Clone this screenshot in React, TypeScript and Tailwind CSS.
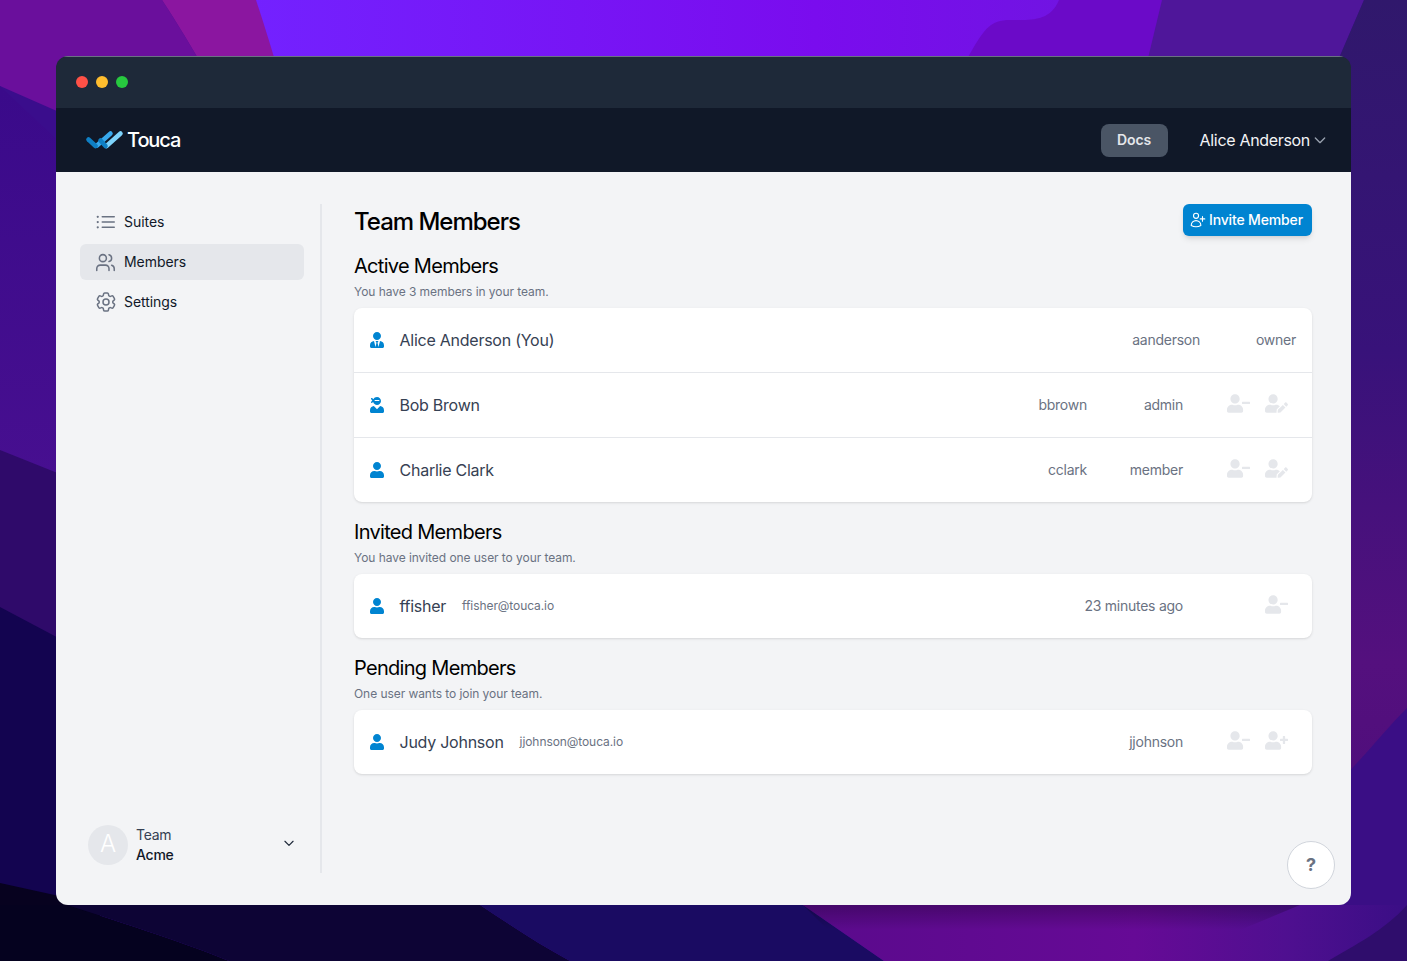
import { ReactNode } from "react";
import { FaUser, FaUserEdit, FaUserMinus, FaUserNinja, FaUserPlus, FaUserTie } from "react-icons/fa";
import { HiOutlineChevronDown } from "react-icons/hi";
import { HiOutlineCog6Tooth, HiOutlineListBullet, HiOutlineUserPlus } from "react-icons/hi2";
import { Users } from "lucide-react";

function Wallpaper() {
  return (
    <svg className="absolute inset-0" width="1407" height="961" viewBox="0 0 1407 961">
      <defs>
        <linearGradient id="top" x1="0" y1="0" x2="1" y2="0">
          <stop offset="0" stopColor="#7322ff" />
          <stop offset="0.6" stopColor="#7a0cee" />
          <stop offset="1" stopColor="#6c18dc" />
        </linearGradient>
        <linearGradient id="right" gradientUnits="userSpaceOnUse" x1="0" y1="0" x2="0" y2="780">
          <stop offset="0" stopColor="#30186c" />
          <stop offset="0.45" stopColor="#38127a" />
          <stop offset="0.85" stopColor="#54107e" />
          <stop offset="1" stopColor="#500e7c" />
        </linearGradient>
        <linearGradient id="left" gradientUnits="userSpaceOnUse" x1="0" y1="90" x2="0" y2="480">
          <stop offset="0" stopColor="#3a0a8a" />
          <stop offset="1" stopColor="#470f90" />
        </linearGradient>
        <linearGradient id="purple" x1="0" y1="0" x2="1" y2="0">
          <stop offset="0" stopColor="#5a0a8c" />
          <stop offset="0.55" stopColor="#660a96" />
          <stop offset="0.8" stopColor="#4f0f90" />
          <stop offset="1" stopColor="#3a0e85" />
        </linearGradient>
        <linearGradient id="shade" x1="0" y1="0" x2="0" y2="1">
          <stop offset="0" stopColor="#000" stopOpacity="0.25" />
          <stop offset="1" stopColor="#000" stopOpacity="0" />
        </linearGradient>
      </defs>
      <rect width="1407" height="961" fill="#3a0d8c" />
      <rect x="240" width="960" height="120" fill="url(#top)" />
      <path d="M0 0H162C195 50 215 90 240 130H100L0 86Z" fill="#6a0f9c" />
      <path d="M162 0H256C266 30 275 60 290 110L240 130C215 90 195 50 162 0Z" fill="#8b16a0" />
      <path d="M1059 0C1050 22 1030 20 1010 20C990 20 985 30 975 45L943 100H1150L1162 0Z" fill="#6b0ac8" />
      <path d="M1162 0H1364L1321 100H1138Z" fill="#4f169a" />
      <path d="M1364 0H1407V780H1300V100H1321Z" fill="url(#right)" />
      <path d="M1300 810C1340 790 1375 740 1407 708V961H1300Z" fill="#3a0e85" />
      <path d="M0 86L100 180V500H0Z" fill="url(#left)" />
      <path d="M0 450L100 490V700H0Z" fill="#2f0a6a" />
      <path d="M0 607L100 660V905H0Z" fill="#130450" />
      <path d="M0 883L100 905V961H0Z" fill="#07021f" />
      <path d="M0 905H67C130 925 190 945 229 961H0Z" fill="#05021f" />
      <path d="M67 905H480C510 925 540 945 570 961H229C190 945 130 925 67 905Z" fill="#0d0435" />
      <path d="M480 905H803L884 961H570C540 945 510 925 480 905Z" fill="#1a0b62" />
      <path d="M803 905H1407V961H884Z" fill="url(#purple)" />
      <path d="M803 905H1300L1240 930H828Z" fill="url(#shade)" />
      <path d="M1328 961C1355 945 1385 930 1407 905V961Z" fill="#2f0d6c" />
    </svg>
  );
}

function Logo() {
  return (
    <svg width="38" height="21" viewBox="0 0 38 21" fill="none" strokeLinecap="round" strokeWidth="4.5">
      <path d="M11 15.5L24.5 3.5" stroke="#38a8ec" />
      <path d="M20.5 16L34.5 3.5" stroke="#7dd3fc" />
      <path d="M2.5 9.5L9.5 16" stroke="#0f7fc4" />
      <path d="M14.5 10.5L19.5 16" stroke="#0f7fc4" />
    </svg>
  );
}

function NavItem({ icon, label, active }: { icon: ReactNode; label: string; active?: boolean }) {
  return (
    <div
      className={
        "flex h-9 items-center rounded-md pl-[14px] text-sm tracking-[-0.05px] text-gray-900 " +
        (active ? "bg-gray-200" : "")
      }
    >
      <span className="flex w-[30px] text-gray-500">{icon}</span>
      {label}
    </div>
  );
}

function Section({ title, sub, children }: { title: string; sub: string; children: ReactNode }) {
  return (
    <section className="mt-4">
      <h2 className="text-xl leading-7 tracking-[-0.7px] text-black">{title}</h2>
      <p className="mt-1 text-xs leading-4 tracking-[-0.06px] text-gray-500">{sub}</p>
      <div className="mt-2 rounded-lg bg-white shadow-sm">{children}</div>
    </section>
  );
}

function Actions({ icons }: { icons: ReactNode[] }) {
  return (
    <div className="mb-1 ml-9 flex w-[77px] justify-end text-gray-200">
      {icons.map((icon, i) => (
        <span key={i} className="flex w-[38.5px] justify-center">
          {icon}
        </span>
      ))}
    </div>
  );
}

function Row({
  icon,
  name,
  email,
  children,
  divided,
}: {
  icon: ReactNode;
  name: string;
  email?: string;
  children: ReactNode;
  divided?: boolean;
}) {
  return (
    <div className={"flex items-center justify-between px-4 " + (divided ? "h-[65px] border-b border-gray-200" : "h-16")}>
      <div className="flex items-center">
        <span className="-ml-px flex w-[30.5px] text-sky-600">{icon}</span>
        <span className="tracking-[-0.25px] text-gray-700">{name}</span>
        {email && <span className="ml-4 text-xs tracking-[-0.08px] text-gray-500">{email}</span>}
      </div>
      <div className="flex items-center text-sm tracking-[-0.25px] text-gray-500">{children}</div>
    </div>
  );
}

export default function App() {
  const minus = <FaUserMinus size={23} />;
  const edit = <FaUserEdit size={23} />;
  const plus = <FaUserPlus size={23} />;

  return (
    <div className="relative h-[961px] overflow-hidden px-14 pt-14 font-['Inter',sans-serif]">
      <Wallpaper />
      <div className="relative flex h-[849px] flex-col overflow-hidden rounded-xl">
        <div className="flex h-[52px] items-center gap-2 border-t border-gray-500 bg-gray-800 px-5 pb-[2px]">
          <span className="h-3 w-3 rounded-full bg-[#ff5147]" />
          <span className="h-3 w-3 rounded-full bg-[#ffbd2e]" />
          <span className="h-3 w-3 rounded-full bg-[#27c93f]" />
        </div>
        <header className="flex h-16 items-center justify-between bg-gray-900 pl-[30px] pr-[23px]">
          <div className="flex items-center gap-[3px]">
            <Logo />
            <span className="text-xl font-medium tracking-[-1.1px] text-white">Touca</span>
          </div>
          <div className="flex items-center">
            <span className="flex h-[33px] w-[67px] items-center justify-center rounded-lg bg-gray-600 text-sm font-semibold tracking-[-0.1px] text-gray-200">
              Docs
            </span>
            <span className="ml-8 tracking-[-0.32px] text-gray-100">Alice Anderson</span>
            <HiOutlineChevronDown size={16} className="ml-[2px] text-gray-400" />
          </div>
        </header>
        <div className="flex min-h-0 flex-1 bg-gray-100 py-8">
          <aside className="flex w-[266px] flex-col justify-between border-r-2 border-gray-200 pl-6 pr-4">
            <nav className="flex flex-col gap-1">
              <NavItem icon={<HiOutlineListBullet size={24} />} label="Suites" />
              <NavItem icon={<Users size={21} strokeWidth={1.75} className="ml-[1px]" />} label="Members" active />
              <NavItem icon={<HiOutlineCog6Tooth size={24} />} label="Settings" />
            </nav>
            <div className="flex items-center justify-between px-2 pb-2">
              <div className="flex items-center gap-2">
                <span className="flex h-10 w-10 items-center justify-center rounded-full bg-gray-200 pb-[2px] text-2xl font-light text-white">
                  A
                </span>
                <div className="text-sm leading-5 tracking-[-0.25px]">
                  <div className="text-gray-700">Team</div>
                  <div className="font-medium text-gray-900">Acme</div>
                </div>
              </div>
              <HiOutlineChevronDown size={14} className="mb-1 text-gray-800" />
            </div>
          </aside>
          <main className="flex-1 pl-8 pr-[39px]">
            <div className="flex h-8 items-center justify-between">
              <h1 className="mt-1 text-2xl font-medium tracking-[-1px] text-black">Team Members</h1>
              <button className="flex h-8 w-[129px] items-center gap-[2px] rounded-md bg-sky-600 pl-[6px] text-sm font-medium tracking-[-0.15px] text-white shadow-md">
                <HiOutlineUserPlus size={18} />
                Invite Member
              </button>
            </div>
            <Section title="Active Members" sub="You have 3 members in your team.">
              <Row divided icon={<FaUserTie size={16} />} name="Alice Anderson (You)">
                <span>aanderson</span>
                <span className="w-24 text-right">owner</span>
              </Row>
              <Row divided icon={<FaUserNinja size={16} />} name="Bob Brown">
                <span>bbrown</span>
                <span className="w-24 text-right">admin</span>
                <Actions icons={[minus, edit]} />
              </Row>
              <Row icon={<FaUser size={16} />} name="Charlie Clark">
                <span>cclark</span>
                <span className="w-24 text-right">member</span>
                <Actions icons={[minus, edit]} />
              </Row>
            </Section>
            <Section title="Invited Members" sub="You have invited one user to your team.">
              <Row icon={<FaUser size={16} />} name="ffisher" email="ffisher@touca.io">
                <span>23 minutes ago</span>
                <Actions icons={[minus]} />
              </Row>
            </Section>
            <Section title="Pending Members" sub="One user wants to join your team.">
              <Row icon={<FaUser size={16} />} name="Judy Johnson" email="jjohnson@touca.io">
                <span>jjohnson</span>
                <Actions icons={[minus, plus]} />
              </Row>
            </Section>
          </main>
        </div>
        <button className="absolute bottom-4 right-4 flex h-12 w-12 items-center justify-center rounded-full border border-gray-300 bg-white text-lg font-bold text-gray-500">
          ?
        </button>
      </div>
    </div>
  );
}
